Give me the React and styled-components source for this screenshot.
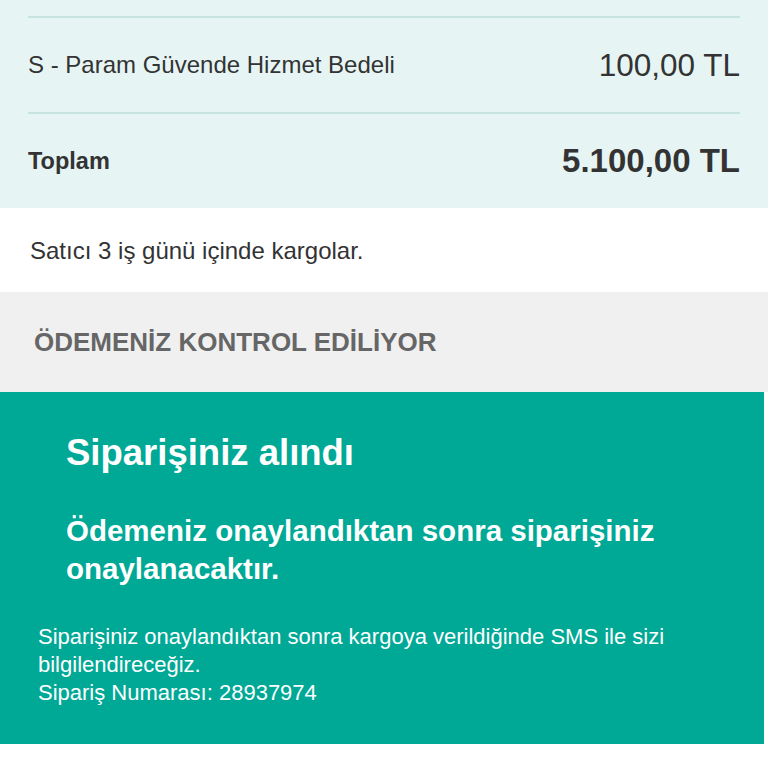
import React from "react";
import styled, { createGlobalStyle } from "styled-components";

const Global = createGlobalStyle`
  html, body {
    margin: 0;
    padding: 0;
    background: #ffffff;
  }
  body {
    font-family: "Liberation Sans", Arial, sans-serif;
    color: #333333;
  }
`;

const Page = styled.div`
  width: 768px;
`;

const Summary = styled.section`
  background: #e6f5f4;
  padding: 16px 28px 0;
  height: 208px;
  box-sizing: border-box;
`;

const Row = styled.div`
  display: flex;
  justify-content: space-between;
  align-items: center;
  height: 96px;
  border-top: 2px solid #c7e3e0;
  box-sizing: border-box;
`;

const Label = styled.span`
  font-size: ${(p) => (p.$bold ? "23.5px" : "24px")};
  font-weight: ${(p) => (p.$bold ? 700 : 400)};
`;

const Amount = styled.span`
  font-size: ${(p) => (p.$bold ? "33px" : "31.5px")};
  font-weight: ${(p) => (p.$bold ? 700 : 400)};
`;

const Note = styled.div`
  height: 84px;
  display: flex;
  align-items: center;
  padding: 2px 30px 0;
  box-sizing: border-box;
  font-size: 24px;
  color: #333333;
`;

const StatusBar = styled.div`
  height: 100px;
  background: #f0f0f0;
  display: flex;
  align-items: center;
  padding: 0 34px;
  font-size: 26px;
  font-weight: 700;
  color: #666666;
`;

const Confirm = styled.section`
  background: #00a896;
  width: 764px;
  height: 352px;
  box-sizing: border-box;
  color: #ffffff;
  padding: 35px 0 0;
`;

const Title = styled.h1`
  margin: 0 0 0 66px;
  font-size: 36.5px;
  line-height: 52px;
  font-weight: 700;
`;

const Subtitle = styled.h2`
  margin: 33px 40px 0 66px;
  font-size: 29.5px;
  line-height: 38px;
  font-weight: 700;
`;

const Info = styled.p`
  margin: 35px 40px 0 38px;
  font-size: 22px;
  line-height: 28px;
`;

export default function App() {
  return (
    <Page>
      <Global />
      <Summary>
        <Row>
          <Label>S - Param Güvende Hizmet Bedeli</Label>
          <Amount>100,00 TL</Amount>
        </Row>
        <Row>
          <Label $bold>Toplam</Label>
          <Amount $bold>5.100,00 TL</Amount>
        </Row>
      </Summary>
      <Note>Satıcı 3 iş günü içinde kargolar.</Note>
      <StatusBar>ÖDEMENİZ KONTROL EDİLİYOR</StatusBar>
      <Confirm>
        <Title>Siparişiniz alındı</Title>
        <Subtitle>Ödemeniz onaylandıktan sonra siparişiniz onaylanacaktır.</Subtitle>
        <Info>
          Siparişiniz onaylandıktan sonra kargoya verildiğinde SMS ile sizi
          bilgilendireceğiz.
          <br />
          Sipariş Numarası: 28937974
        </Info>
      </Confirm>
    </Page>
  );
}
